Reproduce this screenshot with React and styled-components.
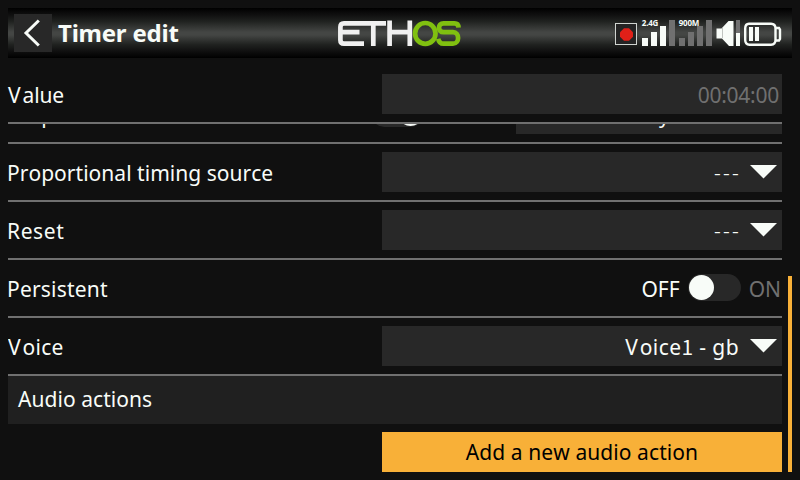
import React from "react";
import styled, { createGlobalStyle } from "styled-components";

const GlobalStyle = createGlobalStyle`
  * { box-sizing: border-box; }
  body { margin: 0; background: #101010; }
`;

const Screen = styled.main`
  width: 800px;
  height: 480px;
  overflow: hidden;
  display: flex;
  flex-direction: column;
  padding: 8px 8px 0;
  background: #101010;
  color: #f8fcf8;
  font-family: "Noto Sans", "Open Sans", sans-serif;
  font-size: 21px;
  font-kerning: none;
`;

const Header = styled.header`
  flex: none;
  height: 50px;
  display: grid;
  grid-template-columns: 38px 286px 124px 1fr 168px;
  align-items: center;
  padding: 0 10px 0 6px;
  background: linear-gradient(#000 0%, #101010 14%, #202220 27%, #444644 48%, #444644 54%, #202220 73%, #101010 86%, #000 100%);
`;

const BackButton = styled.button`
  width: 38px;
  height: 38px;
  border: 0;
  padding: 0;
  background: #282828;
`;

const Title = styled.h1`
  margin: 0;
  padding-left: 6px;
  font-size: 24px;
  line-height: 50px;
  font-weight: 700;
  letter-spacing: -0.22px;
`;

const LogoSvg = styled.svg`
  display: block;
`;

const StatusSvg = styled.svg`
  grid-column: 5;
  display: block;
  overflow: visible;
`;

const Row = styled.div`
  flex: none;
  height: 58px;
  display: flex;
  justify-content: space-between;
  width: 774px;
  padding: 8px 0;
  border-bottom: 2px solid #707070;
`;

const PinnedRow = styled(Row)`
  margin-top: 8px;
`;

const Label = styled.span`
  height: 40px;
  margin-left: ${(p) => (p.$flush ? -1 : 0)}px;
  line-height: 42px;
  white-space: nowrap;
  letter-spacing: ${(p) => p.$spacing ?? 0}px;
`;

const WideCapital = styled.span`
  letter-spacing: 2px;
`;

const Field = styled.div`
  display: flex;
  justify-content: flex-end;
  width: ${(p) => p.$width ?? 400}px;
  height: 40px;
  padding-right: ${(p) => (p.$muted ? 3 : 5)}px;
  gap: 11px;
  line-height: 42px;
  white-space: nowrap;
  letter-spacing: ${(p) => p.$spacing ?? 0.4}px;
  background: #282828;
  color: ${(p) => (p.$muted ? "#707070" : "#f8fcf8")};
`;

const CenteredField = styled(Field)`
  justify-content: center;
  padding: 0;
`;

const Digit = styled.span`
  font-family: "Noto Sans CJK SC", sans-serif;
  line-height: 1;
`;

const Arrow = styled.svg`
  margin-top: 13px;
  flex: none;
`;

const EmptyValue = styled.span`
  letter-spacing: 2.2px;
  margin-right: -2px;
  font-weight: 300;
`;

const SwitchGroup = styled.div`
  display: flex;
  height: 40px;
  gap: 8px;
  padding-right: 1px;
  line-height: 42px;
`;

const Track = styled.span`
  display: flex;
  justify-content: ${(p) => (p.$on ? "flex-end" : "flex-start")};
  width: 53px;
  height: 27px;
  margin-top: 6px;
  padding: 1px;
  border-radius: 14px;
  background: #282828;
`;

const Knob = styled.span`
  width: 25px;
  height: 25px;
  border-radius: 50%;
  background: #f8fcf8;
`;

const SwitchText = styled.span`
  color: ${(p) => (p.$active ? "#f8fcf8" : "#707070")};
`;

const Body = styled.div`
  flex: 1;
  min-height: 0;
  display: flex;
  justify-content: space-between;
  overflow: hidden;
`;

const List = styled.div`
  display: flex;
  flex-direction: column;
  margin-top: -38px;
`;

const SplitControls = styled.div`
  display: flex;
  gap: 92px;
`;

const Section = styled.div`
  flex: none;
  width: 774px;
  height: 48px;
  padding-left: 10px;
  line-height: 46px;
  letter-spacing: 0.05px;
  background: #202020;
`;

const AddButton = styled.button`
  flex: none;
  align-self: flex-end;
  width: 400px;
  height: 40px;
  margin-top: 8px;
  padding: 0;
  border: 0;
  background: #f8b038;
  color: #000;
  font: inherit;
  font-kerning: none;
  line-height: 40px;
  letter-spacing: 0.08px;
`;

const ScrollThumb = styled.div`
  width: 4px;
  height: 196px;
  margin-top: 152px;
  background: #f8b038;
`;

function Logo() {
  return (
    <LogoSvg width="124" height="28" viewBox="338 19 124 28" fill="none" strokeWidth="4.7" aria-label="ETHOS">
      <g stroke="#f0f0f0">
        <path d="M386 23.3H344Q340.4 23.3 340.4 27V40Q340.4 43.7 344 43.7H364M341 32.2H359.5M373.3 24V46" />
        <path d="M389.6 20.5V46M409.8 20.5V46M390 32.2H410" />
      </g>
      <g stroke="#80c010">
        <ellipse cx="425.3" cy="33.4" rx="10.2" ry="10.4" />
        <path d="M458.6 27.6C458.4 24.5 457 23.3 454.5 23.3H443.5C437.5 23.3 437.5 32.2 443.5 32.2H453C459.8 32.2 459.8 43.7 453 43.7H443.5C440.5 43.7 438.8 41.8 438.2 38.7" />
      </g>
    </LogoSvg>
  );
}

function Bars({ x, lit }) {
  return [38, 32, 26, 20].map((y, i) => (
    <rect key={y} x={x + i * 9} y={y} width="6" height={46 - y} fill={i < lit ? "#f8fcf8" : "#707070"} />
  ));
}

function Status() {
  return (
    <StatusSvg width="168" height="28" viewBox="614 19 168 28">
      <rect x="615.5" y="23.5" width="21" height="21" fill="#242424" stroke="#d0d4d0" />
      <path d="M624 28.3h5l4 4v4.5l-4 4h-5l-4-4v-4.5z" fill="#e02018" />
      <Bars x={642} lit={3} />
      <Bars x={679} lit={0} />
      <g fill="#f8fcf8" fontFamily="Noto Sans" fontWeight="700" fontSize="8">
        <text x="641.8" y="26.2" textLength="16.5">2.4G</text>
        <text x="678.8" y="26.2" textLength="20.5">900M</text>
      </g>
      <path d="M716.5 28.5h5l7-7.5h5v25H729l-7-7.5h-5.5z" fill="#f8fcf8" />
      <path d="M722.5 28v10" stroke="#c0c4c0" />
      <rect x="736" y="20" width="4" height="13" fill="#707070" />
      <rect x="736" y="33" width="4" height="13" fill="#f8fcf8" />
      <g fill="none" stroke="#f8fcf8" strokeWidth="2.4">
        <path d="M749 23.8H771Q775.5 24 775.5 28.5V40Q775.5 44.5 771 44.7H749.5Q745.2 44.5 745.2 40V28.5Q745.2 24 749 23.8Z" />
        <path d="M776 28H779L780 29.5V39L779 40.5H776" />
      </g>
      <rect x="749" y="27" width="4" height="14" fill="#f8fcf8" />
      <rect x="755" y="27" width="4" height="14" fill="#f8fcf8" />
    </StatusSvg>
  );
}

function Dropdown({ children, spacing }) {
  return (
    <Field $spacing={spacing}>
      <span>{children}</span>
      <Arrow width="27" height="14"><path d="M0 0H27L13.5 13.5Z" fill="#f8fcf8" /></Arrow>
    </Field>
  );
}

export default function App() {
  return (
    <Screen>
      <GlobalStyle />
      <Header>
        <BackButton aria-label="Back">
          <svg width="38" height="38" fill="none" stroke="#f8fcf8" strokeWidth="3">
            <path d="M24.8 6.5L12 19L24.8 31.5" />
          </svg>
        </BackButton>
        <Title>Timer edit</Title>
        <Logo />
        <Status />
      </Header>
      <PinnedRow>
        <Label $spacing={-0.2}><WideCapital>V</WideCapital>alue</Label>
        <Field $muted $spacing={-0.25}>00:04:00</Field>
      </PinnedRow>
      <Body>
        <List>
          <Row>
            <Label $spacing={0.8}>Step</Label>
            <SplitControls>
              <Track $on><Knob /></Track>
              <CenteredField $width={266}>Play</CenteredField>
            </SplitControls>
          </Row>
          <Row>
            <Label $flush $spacing={0.03}>Proportional timing source</Label>
            <Dropdown><EmptyValue>---</EmptyValue></Dropdown>
          </Row>
          <Row>
            <Label $flush $spacing={0.6}>Reset</Label>
            <Dropdown><EmptyValue>---</EmptyValue></Dropdown>
          </Row>
          <Row>
            <Label $flush $spacing={0.2}>Persistent</Label>
            <SwitchGroup>
              <SwitchText $active>OFF</SwitchText>
              <Track><Knob /></Track>
              <SwitchText>ON</SwitchText>
            </SwitchGroup>
          </Row>
          <Row>
            <Label $spacing={0.2}><WideCapital>V</WideCapital>oice</Label>
            <Dropdown><WideCapital>V</WideCapital>oice<Digit>1</Digit> - gb</Dropdown>
          </Row>
          <Section>Audio actions</Section>
          <AddButton>Add a new audio action</AddButton>
        </List>
        <ScrollThumb />
      </Body>
    </Screen>
  );
}
